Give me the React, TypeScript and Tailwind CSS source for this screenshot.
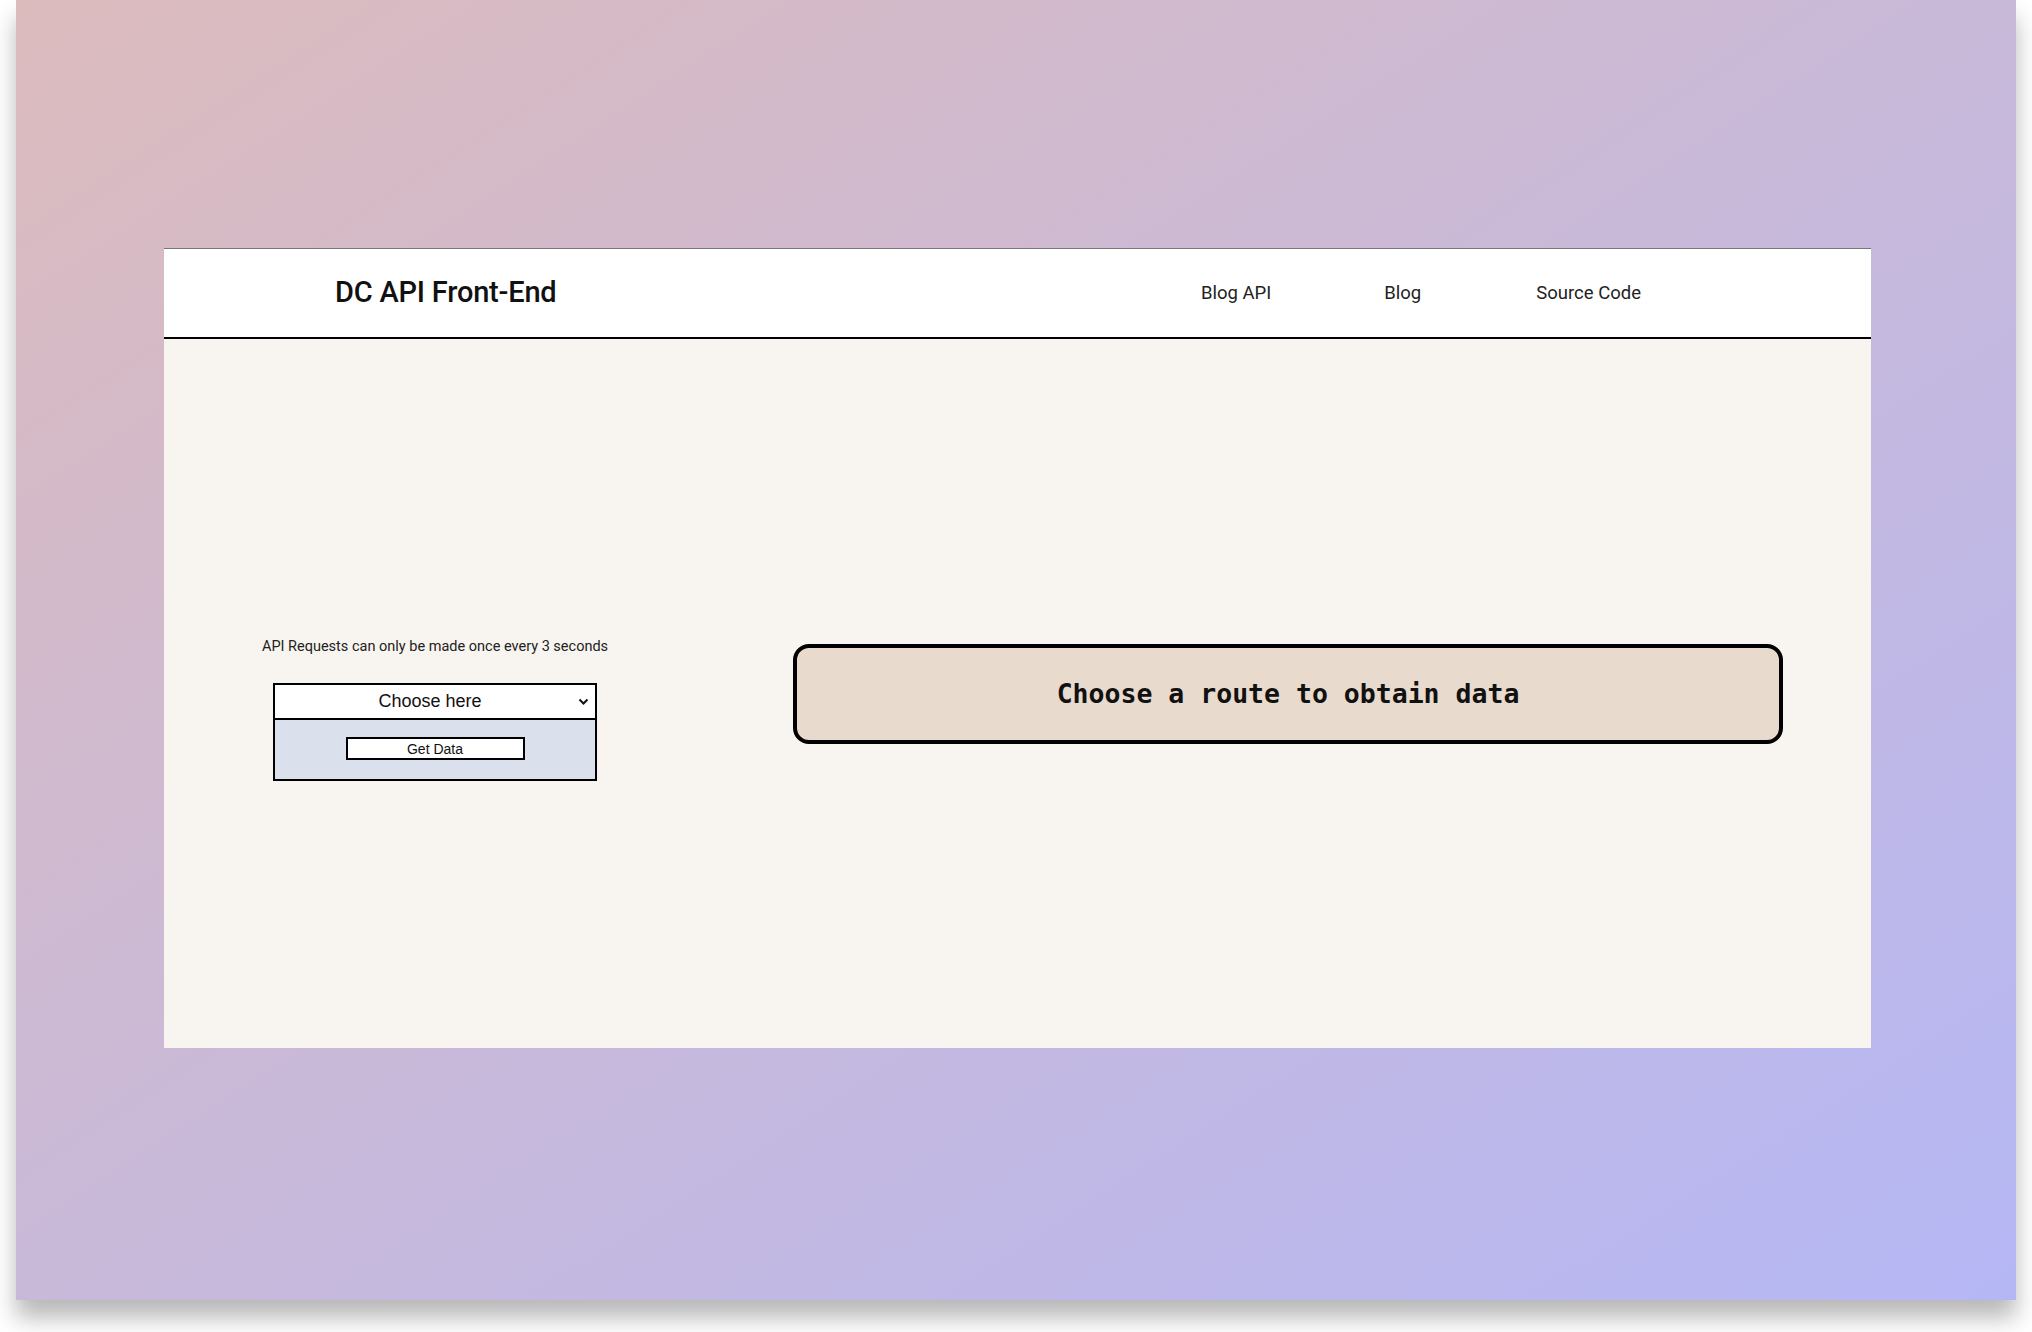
import React from "react";

export default function App() {
  return (
    <div className="w-[2032px] h-[1332px] bg-white overflow-hidden" style={{ fontFamily: "Roboto, 'Liberation Sans', sans-serif" }}>
      <div className="ml-[16px] w-[2000px] h-[1300px] bg-[linear-gradient(to_bottom_right,#dcbbbd,#b5b7f5)] shadow-[0_18px_22px_rgba(0,0,0,0.28)] pt-[248px] pl-[148px]">
        <div className="w-[1707px] h-[800px] flex flex-col border-t border-[#777]">
          <header className="h-[90px] bg-white border-b-2 border-black flex items-center shrink-0">
            <div className="ml-[171px] text-[29px] text-[#111] font-medium tracking-[-0.2px]">DC API Front-End</div>
            <nav className="ml-auto mr-[230px] flex items-center text-[18.5px] text-[#222] pt-[2px]">
              <span>Blog API</span>
              <span className="ml-[113px]">Blog</span>
              <span className="ml-[115px]">Source Code</span>
            </nav>
          </header>
          <main className="flex-1 bg-[#f8f5f0] flex items-center">
            <div className="w-[542px] mt-[30px] flex flex-col items-center">
              <p className="text-[14.5px] text-[#222] mb-[26px]">API Requests can only be made once every 3 seconds</p>
              <div className="w-[324px] border-2 border-black bg-[#dbe1ec] flex flex-col">
                <div className="h-[35px] bg-white border-b-2 border-black flex items-center relative">
                  <span className="flex-1 text-center text-[18px] text-[#111] pr-[10px]" style={{ fontFamily: "'Liberation Sans', Arial, sans-serif" }}>Choose here</span>
                  <svg className="absolute right-[6px] top-[13px]" width="11" height="8" viewBox="0 0 11 8">
                    <path d="M1.5 1.5 L5.5 5.5 L9.5 1.5" fill="none" stroke="#111" strokeWidth="2" />
                  </svg>
                </div>
                <div className="h-[59px] flex items-start justify-center pt-[17px]">
                  <button className="w-[179px] h-[23px] bg-white border-2 border-black text-[14px] text-[#111] leading-none" style={{ fontFamily: "'Liberation Sans', Arial, sans-serif" }}>Get Data</button>
                </div>
              </div>
            </div>
            <div className="ml-[87px] w-[990px] h-[100px] border-4 border-black rounded-[16px] bg-[#e8dacc] flex items-center justify-center">
              <span className="text-[26.5px] font-bold text-[#111]" style={{ fontFamily: "'DejaVu Sans Mono', monospace" }}>Choose a route to obtain data</span>
            </div>
          </main>
        </div>
      </div>
    </div>
  );
}
